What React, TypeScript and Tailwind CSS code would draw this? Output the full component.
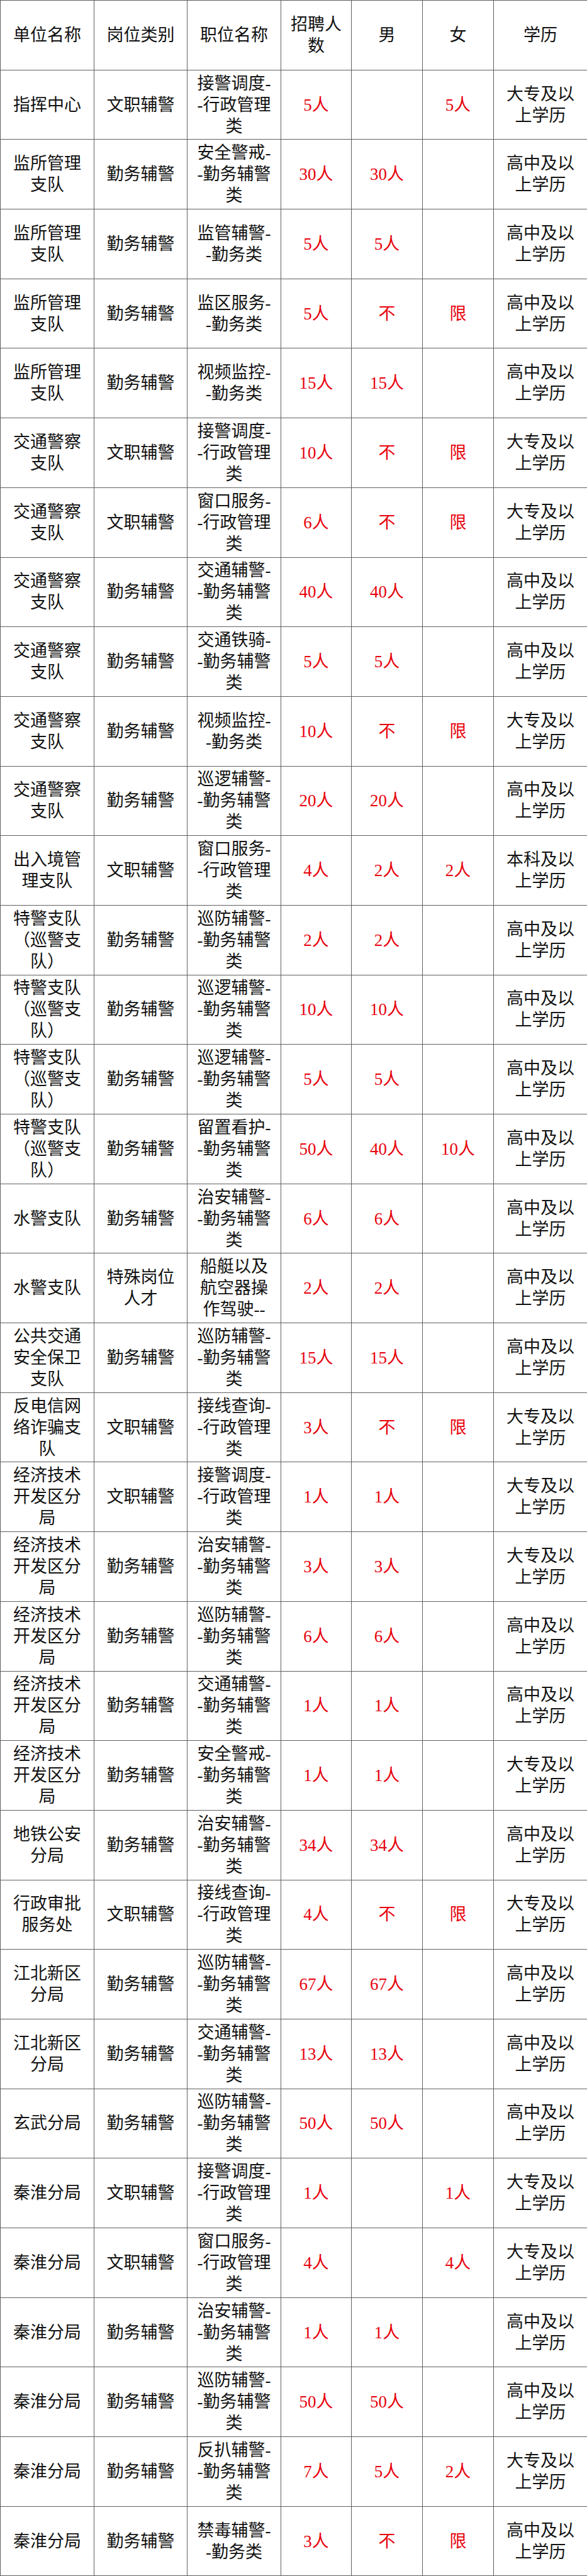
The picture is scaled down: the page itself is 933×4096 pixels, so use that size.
const D = "大专及以|上学历";
const G = "高中及以|上学历";
const B = "本科及以|上学历";

const XZ = "-行政管理|类";
const QW = "-勤务辅警|类";
const QWL = "-勤务类";

// 单位名称, 岗位类别, 职位名称, 招聘人数, 男, 女, 学历
const rows: string[][] = [
  ["指挥中心", "文职辅警", "接警调度-|" + XZ, "5人", "", "5人", D],
  ["监所管理|支队", "勤务辅警", "安全警戒-|" + QW, "30人", "30人", "", G],
  ["监所管理|支队", "勤务辅警", "监管辅警-|" + QWL, "5人", "5人", "", G],
  ["监所管理|支队", "勤务辅警", "监区服务-|" + QWL, "5人", "不", "限", G],
  ["监所管理|支队", "勤务辅警", "视频监控-|" + QWL, "15人", "15人", "", G],
  ["交通警察|支队", "文职辅警", "接警调度-|" + XZ, "10人", "不", "限", D],
  ["交通警察|支队", "文职辅警", "窗口服务-|" + XZ, "6人", "不", "限", D],
  ["交通警察|支队", "勤务辅警", "交通辅警-|" + QW, "40人", "40人", "", G],
  ["交通警察|支队", "勤务辅警", "交通铁骑-|" + QW, "5人", "5人", "", G],
  ["交通警察|支队", "勤务辅警", "视频监控-|" + QWL, "10人", "不", "限", D],
  ["交通警察|支队", "勤务辅警", "巡逻辅警-|" + QW, "20人", "20人", "", G],
  ["出入境管|理支队", "文职辅警", "窗口服务-|" + XZ, "4人", "2人", "2人", B],
  ["特警支队|（巡警支|队）", "勤务辅警", "巡防辅警-|" + QW, "2人", "2人", "", G],
  ["特警支队|（巡警支|队）", "勤务辅警", "巡逻辅警-|" + QW, "10人", "10人", "", G],
  ["特警支队|（巡警支|队）", "勤务辅警", "巡逻辅警-|" + QW, "5人", "5人", "", G],
  ["特警支队|（巡警支|队）", "勤务辅警", "留置看护-|" + QW, "50人", "40人", "10人", G],
  ["水警支队", "勤务辅警", "治安辅警-|" + QW, "6人", "6人", "", G],
  ["水警支队", "特殊岗位|人才", "船艇以及|航空器操|作驾驶--", "2人", "2人", "", G],
  ["公共交通|安全保卫|支队", "勤务辅警", "巡防辅警-|" + QW, "15人", "15人", "", G],
  ["反电信网|络诈骗支|队", "文职辅警", "接线查询-|" + XZ, "3人", "不", "限", D],
  ["经济技术|开发区分|局", "文职辅警", "接警调度-|" + XZ, "1人", "1人", "", D],
  ["经济技术|开发区分|局", "勤务辅警", "治安辅警-|" + QW, "3人", "3人", "", D],
  ["经济技术|开发区分|局", "勤务辅警", "巡防辅警-|" + QW, "6人", "6人", "", G],
  ["经济技术|开发区分|局", "勤务辅警", "交通辅警-|" + QW, "1人", "1人", "", G],
  ["经济技术|开发区分|局", "勤务辅警", "安全警戒-|" + QW, "1人", "1人", "", D],
  ["地铁公安|分局", "勤务辅警", "治安辅警-|" + QW, "34人", "34人", "", G],
  ["行政审批|服务处", "文职辅警", "接线查询-|" + XZ, "4人", "不", "限", D],
  ["江北新区|分局", "勤务辅警", "巡防辅警-|" + QW, "67人", "67人", "", G],
  ["江北新区|分局", "勤务辅警", "交通辅警-|" + QW, "13人", "13人", "", G],
  ["玄武分局", "勤务辅警", "巡防辅警-|" + QW, "50人", "50人", "", G],
  ["秦淮分局", "文职辅警", "接警调度-|" + XZ, "1人", "", "1人", D],
  ["秦淮分局", "文职辅警", "窗口服务-|" + XZ, "4人", "", "4人", D],
  ["秦淮分局", "勤务辅警", "治安辅警-|" + QW, "1人", "1人", "", G],
  ["秦淮分局", "勤务辅警", "巡防辅警-|" + QW, "50人", "50人", "", G],
  ["秦淮分局", "勤务辅警", "反扒辅警-|" + QW, "7人", "5人", "2人", D],
  ["秦淮分局", "勤务辅警", "禁毒辅警-|" + QWL, "3人", "不", "限", G],
];

const header = ["单位名称", "岗位类别", "职位名称", "招聘人|数", "男", "女", "学历"];

function Lines({ text }: { text: string }) {
  return (
    <>
      {text.split("|").map((line, i) => (
        <div key={i} className="whitespace-nowrap">
          {line}
        </div>
      ))}
    </>
  );
}

const cellClass =
  "border border-[#606060] text-center align-middle p-0";

export default function App() {
  return (
    <div className="w-[933px] bg-white font-['Liberation_Serif','Noto_Sans_CJK_SC',serif] text-[27px] leading-[34px] text-[#111]">
      <table className="w-[933px] table-fixed border-collapse">
        <colgroup>
          <col className="w-[149px]" />
          <col className="w-[148px]" />
          <col className="w-[149px]" />
          <col className="w-[112px]" />
          <col className="w-[113px]" />
          <col className="w-[113px]" />
          <col className="w-[149px]" />
        </colgroup>
        <thead>
          <tr className="h-[110.7px]">
            {header.map((h, i) => (
              <th key={i} className={cellClass + " font-normal"}>
                <Lines text={h} />
              </th>
            ))}
          </tr>
        </thead>
        <tbody>
          {rows.map((r, ri) => (
            <tr key={ri} className="h-[110.7px]">
              <td className={cellClass}>
                <Lines text={r[0]} />
              </td>
              <td className={cellClass}>
                <Lines text={r[1]} />
              </td>
              <td className={cellClass}>
                <Lines text={r[2]} />
              </td>
              <td className={cellClass + " text-[#e8000b]"}>{r[3]}</td>
              <td className={cellClass + " text-[#e8000b]"}>{r[4]}</td>
              <td className={cellClass + " text-[#e8000b]"}>{r[5]}</td>
              <td className={cellClass}>
                <Lines text={r[6]} />
              </td>
            </tr>
          ))}
        </tbody>
      </table>
    </div>
  );
}
